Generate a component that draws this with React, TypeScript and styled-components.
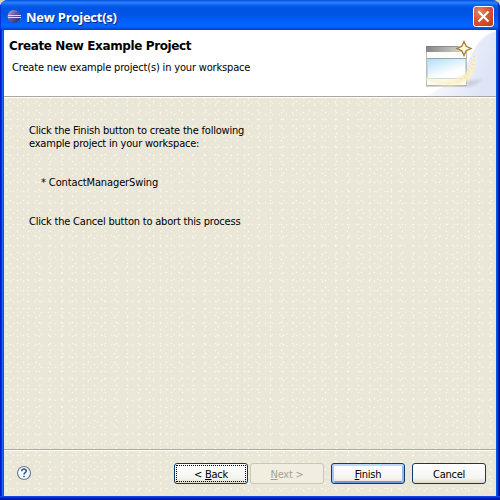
import React from "react";
import styled, { createGlobalStyle } from "styled-components";

const Global = createGlobalStyle`
  * { box-sizing: border-box; }
  body { margin: 0; background: #d8d4c4; overflow: hidden; }
`;

const Window = styled.div`
  width: 500px;
  height: 500px;
  display: flex;
  flex-direction: column;
  overflow: hidden;
  border-radius: 8px 8px 0 0;
  background: #0831d9;
  font: 11px/13px "DejaVu Sans Condensed", "DejaVu Sans", sans-serif;
  font-stretch: condensed;
  color: #000;
`;

const TitleBar = styled.header`
  flex: none;
  height: 30px;
  display: flex;
  align-items: center;
  padding: 3px 6px 0 7px;
  background: linear-gradient(
    #0a48c8 0, #1268f4 1px, #2a82ff 3px, #0a62ee 5px, #0054e3 8px,
    #0055e5 15px, #005df5 20px, #0066ff 25px, #0062fa 27px, #004ad0 29px, #003dba 30px
  );
  box-shadow: inset 1px 0 #0831d9, inset -2px 0 #0530c0;
`;

const Title = styled.h1`
  flex: 1;
  margin: 0 0 0 4px;
  font: bold 13px/18px "Open Sans", "Noto Sans", sans-serif;
  letter-spacing: -0.24px;
  color: #fff;
  text-shadow: 1px 1px #0a2a85;
`;

const CloseButton = styled.button`
  width: 21px;
  height: 21px;
  padding: 0;
  display: grid;
  place-items: center;
  border: 1px solid #fff;
  border-radius: 3px;
  background: radial-gradient(circle at 30% 25%, #ea8468 0, #dc5233 45%, #c43a18 100%);
`;

const Frame = styled.div`
  flex: 1;
  display: flex;
  flex-direction: column;
  padding: 0 4px 4px;
  background:
    linear-gradient(#0b48ec 0 1px, #0831d9 1px 2px, #0019a8 2px 4px) bottom / 100% 4px no-repeat,
    linear-gradient(90deg, #0019cf 0 1px, #0831d9 1px 2px, #166aee 2px 3px, #0855dd 3px 4px) left / 4px 100% no-repeat,
    linear-gradient(90deg, #0855ee 0 1px, #0441d8 1px 2px, #001da0 2px 3px, #00138c 3px 4px) right / 4px 100% no-repeat;
`;

const Banner = styled.section`
  height: 66px;
  flex: none;
  display: flex;
  justify-content: space-between;
  background: #fff;
`;

const BannerText = styled.div`
  padding: 9px 0 0 5px;
`;

const Heading = styled.h2`
  margin: 0;
  font: bold 12px/14px "DejaVu Sans", sans-serif;
  font-stretch: normal;
  letter-spacing: -0.38px;
  white-space: nowrap;
`;

const Text = styled.p<{ $spacing?: number; $indent?: number; $top?: number }>`
  margin: ${(p) => p.$top ?? 0}px 0 0 ${(p) => p.$indent ?? 0}px;
  letter-spacing: ${(p) => p.$spacing ?? -0.2}px;
  white-space: nowrap;
`;

const Body = styled.div`
  flex: 1;
  display: flex;
  flex-direction: column;
  background:
    radial-gradient(circle at 2.5px 2.5px, #fdf9e6 0.6px, transparent 1.1px) 0 0 / 11px 7px,
    radial-gradient(circle at 2.5px 2.5px, #f9e1cb 0.6px, transparent 1.1px) 3px 1px / 17px 13px,
    radial-gradient(circle at 2.5px 2.5px, #fdf9e8 0.6px, transparent 1.1px) 4px 3px / 13px 9px,
    radial-gradient(circle at 2.5px 2.5px, #f8f3e2 0.6px, transparent 1.1px) 7px 5px / 7px 11px,
    #ebe7d8;
`;

const Rule = styled.div`
  height: 2px;
  flex: none;
  background: linear-gradient(#aca899 50%, #fff 50%);
`;

const Content = styled.main`
  flex: 1;
  padding: 26px 0 0 25px;
`;

const Footer = styled.footer`
  height: 45px;
  flex: none;
  display: flex;
  align-items: flex-start;
  padding: 12px 10px 0 12px;
`;

const Help = styled.div`
  height: 16px;
  margin: 2px auto 0 0;
`;

const Button = styled.button<{ $kind?: "focused" | "disabled" | "primary"; $gap?: number }>`
  width: 74px;
  height: 21px;
  margin: 0 0 0 ${(p) => p.$gap ?? 0}px;
  padding: ${(p) => (p.$kind === "focused" ? "0" : "2px 1px 0")};
  font: inherit;
  font-stretch: inherit;
  line-height: 15px;
  letter-spacing: -0.25px;
  color: ${(p) => (p.$kind === "disabled" ? "#a5a293" : "#000")};
  border: 1px solid ${(p) => (p.$kind === "disabled" ? "#c9c7ba" : "#0b3c70")};
  border-radius: 3px;
  background: ${(p) =>
    p.$kind === "disabled" ? "#f1eee1" : "linear-gradient(#fff, #f5f4ef 75%, #dedace)"};
  box-shadow: ${(p) =>
    p.$kind === "primary"
      ? "inset 0 2px #c0d6fb, inset 2px 0 #a9c5f3, inset -2px 0 #9ab7ed, inset 0 -2px #7195df"
      : "none"};
`;

const Focus = styled.span`
  display: block;
  height: 17px;
  margin: 0 1px;
  padding-top: 1px;
  border: 1px dotted #000;
`;

const EclipseIcon = () => (
  <svg width="15" height="16" viewBox="0 0 15 16">
    <defs>
      <linearGradient id="orb" x1="0" y1="0" x2="1" y2="1">
        <stop offset="0" stopColor="#d5b5cc" />
        <stop offset=".4" stopColor="#695faa" />
        <stop offset="1" stopColor="#22206c" />
      </linearGradient>
    </defs>
    <circle cx="7" cy="7.500" r="6.500" fill="url(#orb)" />
    <path d="M1 6.500h13M1 8.500h13" stroke="#dcdcfa" />
  </svg>
);

const WizardImage = () => (
  <svg width="78" height="66" viewBox="0 0 78 66">
    <defs>
      <linearGradient id="sweep" x1=".1" y1="0" x2="1" y2=".3">
        <stop offset="0" stopColor="#fff" />
        <stop offset="1" stopColor="#dfe5f6" />
      </linearGradient>
      <linearGradient id="bar"><stop offset="0" stopColor="#858585" /><stop offset="1" stopColor="#dededb" /></linearGradient>
      <linearGradient id="pane" x1="0" y1="0" x2=".6" y2="1">
        <stop offset="0" stopColor="#afddf8" /><stop offset=".8" stopColor="#fff" />
      </linearGradient>
      <linearGradient id="glow"><stop offset="0" stopColor="#fbf2c8" stopOpacity=".6" /><stop offset="1" stopColor="#fbf0c4" /></linearGradient>
      <filter id="soft" x="-20%" y="-50%" width="140%" height="200%"><feGaussianBlur stdDeviation="1.800" /></filter>
      <filter id="haze"><feGaussianBlur stdDeviation=".8" /></filter>
    </defs>
    <path d="M78 1C60 7 56 20 50 32S28 57 8 66H78Z" fill="url(#sweep)" />
    <path d="M49 51l17-2-9 6-8 2z" fill="#c9ccdc" filter="url(#soft)" />
    <path d="M8.500 16.500h40v39h-40z" fill="#fcfcf8" stroke="#bdbcb4" />
    <path d="M8 16h41v6H8z" fill="url(#bar)" />
    <path d="M8 16.500h32" stroke="#777" strokeOpacity=".6" />
    <path d="M9.500 28.500h38v20h-38z" fill="url(#pane)" stroke="#c9d6dc" />
    <path d="M9 28.500h39" stroke="#93a7b2" />
    <path d="M8 56h41" stroke="#aaa9a1" />
    <path d="M54 18C60 33 48 50 26 51L4 46C20 61 48 58 55 43Q60 30 54 18Z" fill="url(#glow)" filter="url(#haze)" />
    <path d="M56 26c1 11-5 20-17 26M53 28c1 9-4 17-14 21" fill="none" stroke="#f0d38a" strokeDasharray="1 3" />
    <path d="M46 11.500l2.200 4.800L53 18.500l-4.800 2.200L46 25.500l-2.200-4.800L39 18.500l4.800-2.200z" fill="#fff9df" stroke="#a57925" strokeWidth="1.300" />
  </svg>
);

export default function App() {
  return (
    <>
      <Global />
      <Window>
        <TitleBar>
          <EclipseIcon />
          <Title>New Project(s)</Title>
          <CloseButton aria-label="Close">
            <svg width="13" height="13" viewBox="0 0 13 13">
              <path d="M1.500 1.500l10 10M11.500 1.500l-10 10" stroke="#fff" strokeWidth="2.100" />
            </svg>
          </CloseButton>
        </TitleBar>
        <Frame>
          <Banner>
            <BannerText>
              <Heading>Create New Example Project</Heading>
              <Text $indent={3} $top={8} $spacing={-0.17}>Create new example project(s) in your workspace</Text>
            </BannerText>
            <WizardImage />
          </Banner>
          <Body>
            <Rule />
            <Content>
              <Text>Click the Finish button to create the following<br />example project in your workspace:</Text>
              <Text $indent={12} $top={26} $spacing={-0.12}>* ContactManagerSwing</Text>
              <Text $top={26}>Click the Cancel button to abort this process</Text>
            </Content>
            <Rule />
            <Footer>
              <Help>
                <svg width="16" height="16" viewBox="0 0 16 16">
                  <circle cx="8" cy="8" r="6.500" fill="#f7fbff" stroke="#65809d" strokeWidth="1.200" />
                  <path d="M5.700 6.300C5.700 3.200 10.500 3.500 10.200 6.200C10.100 7.600 8 7.600 8 9.400M8 10.800v1.500" fill="none" stroke="#34597f" strokeWidth="1.600" />
                </svg>
              </Help>
              <Button $kind="focused"><Focus>&lt; <u>B</u>ack</Focus></Button>
              <Button $kind="disabled" $gap={2} disabled><u>N</u>ext &gt;</Button>
              <Button $kind="primary" $gap={7}><u>F</u>inish</Button>
              <Button $gap={7}>Cancel</Button>
            </Footer>
          </Body>
        </Frame>
      </Window>
    </>
  );
}
